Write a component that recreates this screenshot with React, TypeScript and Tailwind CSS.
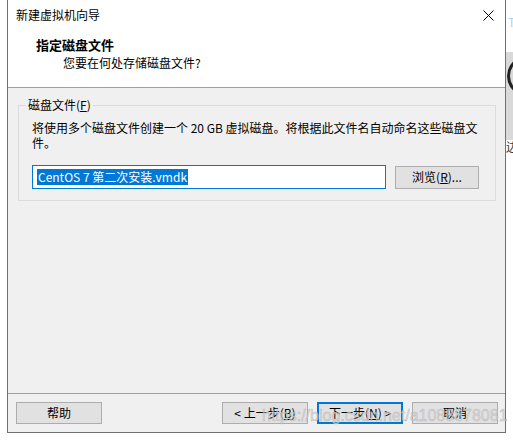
import React from 'react';

const font = { fontFamily: '"Noto Sans CJK SC", "Noto Sans", sans-serif' };

const Btn = ({ children, primary = false }: { children: React.ReactNode; primary?: boolean }) => (
  <div
    className={`w-[86px] h-[22px] flex items-center justify-center text-[12px] leading-none text-black bg-[#e1e1e1] border ${
      primary ? 'border-[#0078d7] ring-1 ring-inset ring-[#0078d7]' : 'border-[#adadad]'
    }`}
  >
    {children}
  </div>
);

const App = () => {
  return (
    <div className="w-[513px] h-[440px] bg-white flex overflow-hidden relative" style={font}>
      {/* Dialog window */}
      <div className="ml-[7px] w-[499px] h-[433px] border-l border-r border-b border-[#6f6f6f] flex flex-col bg-[#f0f0f0] shrink-0">
        {/* Title bar */}
        <div className="h-[30px] bg-white flex items-center justify-between pl-[8px] pr-[10px]">
          <span className="text-[12px] text-black">新建虚拟机向导</span>
          <svg width="11" height="11" viewBox="0 0 11 11" className="mr-[1px]">
            <path d="M0.5 0.5 L10.5 10.5 M10.5 0.5 L0.5 10.5" stroke="#000" strokeWidth="1" />
          </svg>
        </div>

        {/* Header */}
        <div className="h-[58px] bg-white border-b border-[#a0a0a0] pt-[7px] pl-[28px]">
          <div className="text-[13px] font-bold leading-[16px] text-black">指定磁盘文件</div>
          <div className="text-[12px] leading-[16px] mt-[2px] pl-[27px] text-black">您要在何处存储磁盘文件?</div>
        </div>

        {/* Body */}
        <div className="flex-1 pt-[17px] px-[10px] pr-[9px]">
          <div className="relative h-[96px] border border-[#dcdcdc] pl-[13px] pt-[14px]">
            <span className="absolute -top-[9px] left-[7px] bg-[#f0f0f0] px-[2px] text-[12px] leading-[16px] text-black">
              磁盘文件(<span className="underline">F</span>)
            </span>
            <div className="text-[12px] leading-[15px] text-black">
              <div className="whitespace-nowrap">将使用多个磁盘文件创建一个 20 GB 虚拟磁盘。将根据此文件名自动命名这些磁盘文</div>
              <div>件。</div>
            </div>
            <div className="flex items-center mt-[15px]">
              <div className="w-[354px] h-[24px] border border-[#0078d7] bg-white flex items-center pl-[4px]">
                <span className="bg-[#0078d7] text-white text-[12px] leading-[16px] px-[1px]">CentOS 7 第二次安装.vmdk</span>
              </div>
              <div className="ml-[9px] w-[84px] h-[23px] border border-[#adadad] bg-[#e1e1e1] flex items-center justify-center text-[12px] text-black">
                浏览(<span className="underline">R</span>)...
              </div>
            </div>
          </div>
        </div>

        {/* Footer */}
        <div className="h-[39px] border-t border-[#a0a0a0] pt-[8px] pl-[8px] pr-[7px] flex">
          <Btn>帮助</Btn>
          <div className="flex-1" />
          <div className="flex gap-[9px]">
            <Btn>&lt; 上一步(<span className="underline">B</span>)</Btn>
            <Btn primary>下一步(<span className="underline">N</span>) &gt;</Btn>
            <Btn>取消</Btn>
          </div>
        </div>
      </div>

      {/* Background strip on the right */}
      <div className="w-[7px] flex flex-col shrink-0">
        <div className="h-[52px] bg-white pt-[8px] pl-[2px]">
          <span className="text-[12px] leading-none text-[#9fd8ee]">T</span>
        </div>
        <div className="h-[88px] bg-[#d9d9d9] relative overflow-hidden">
          <div className="absolute left-[1px] top-[4px] w-[40px] h-[40px] rounded-full border-[3px] border-[#222]" />
        </div>
        <div className="h-[14px] bg-white text-[12px] leading-[14px] text-[#333] whitespace-nowrap">边</div>
        <div className="flex-1 bg-white" />
      </div>

      {/* Watermark */}
      <div
        className="absolute left-[262px] top-[404px] text-[16px] text-[rgba(210,210,210,0.75)] whitespace-nowrap pointer-events-none"
        style={{ fontFamily: '"Liberation Sans", sans-serif', WebkitTextStroke: '0.4px rgba(160,160,160,0.6)' }}
      >
        https://blog.csdn.net/a1088878081
      </div>
    </div>
  );
};

export default App;
